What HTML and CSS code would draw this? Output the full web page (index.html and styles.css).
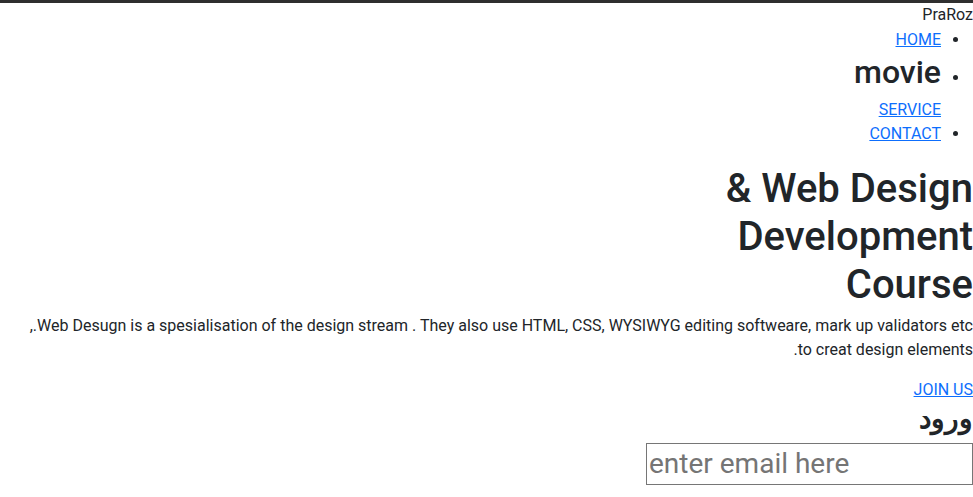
FILE: index.html
```html
<!DOCTYPE html>
<html lang="en" dir="rtl">
<head>
<meta charset="utf-8">
<title>PraRoz</title>
<link rel="stylesheet" href="styles.css">
</head>
<body>
<header class="site-header">
  <div class="brand">PraRoz</div>
  <ul class="nav">
    <li><a href="#">HOME</a></li>
    <li><h2 class="nav-title">movie</h2></li>
    <li class="no-bullet"><a href="#">SERVICE</a></li>
    <li><a href="#">CONTACT</a></li>
  </ul>
</header>
<main class="hero">
  <h1 class="hero-title"><span class="ln">Web Design &amp;</span><span class="ln">Development Course</span></h1>
  <p class="hero-text"><span class="ln">Web Desugn is a spesialisation of the design stream . They also use HTML, CSS, WYSIWYG editing softweare, mark up validators etc.,</span><span class="ln">to creat design elements.</span></p>
  <a class="join" href="#">JOIN US</a>
  <h3 class="login-title">ورود</h3>
  <input class="email" type="email" placeholder="enter email here">
</main>
</body>
</html>
```
FILE: styles.css
```css
*, *::before, *::after { box-sizing: border-box; }

html { direction: rtl; }

body {
  margin: 0;
  border-top: 3px solid #2f2f2f;
  font-family: Roboto, "Noto Sans", sans-serif;
  font-size: 16px;
  line-height: 1.5;
  color: #212529;
  background: #fff;
}

a { color: #0d6efd; text-decoration: underline; }

.brand { line-height: 24px; }

.nav {
  margin: 0 0 17px;
  padding: 0 32px 0 0;
}

.nav li { padding-top: 1px; margin-bottom: -1px; }
.nav li.no-bullet { list-style: none; }

.nav-title {
  margin: 1px 0 7px;
  font-size: 32px;
  font-weight: 500;
  line-height: 1.2;
}

.hero-title {
  max-width: 330px;
  margin: 0 0 5px auto;
  padding-top: 3px;
  font-size: 40px;
  font-weight: 500;
  line-height: 1.2;
}

.ln { display: block; }

.hero-text { margin: 0 0 16px; }

.join { display: block; width: max-content; }

.login-title {
  margin: 0 0 7px;
  font-size: 28px;
  font-weight: 700;
  line-height: 1.2;
}

.email {
  display: block;
  width: 327px;
  height: 42px;
  padding: 0 2px;
  border: 1px solid #767676;
  border-radius: 0;
  font-family: inherit;
  font-size: 28px;
  color: #212529;
  direction: ltr;
  text-align: left;
}
.email::placeholder { color: #757575; }
```
